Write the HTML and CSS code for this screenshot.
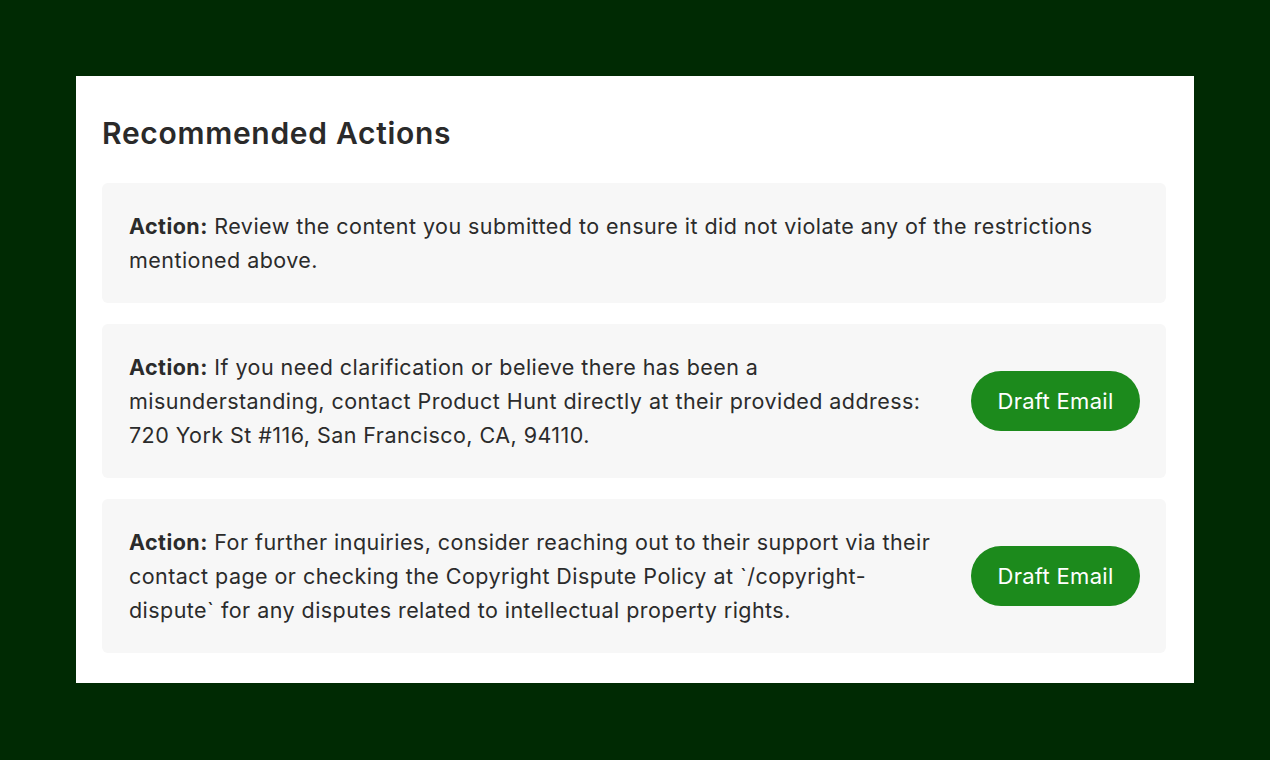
FILE: index.html
```html
<!DOCTYPE html>
<html>
<head>
  <meta charset="utf-8">
  <link rel="stylesheet" href="styles.css">
</head>
<body>
  <div class="panel">
    <h2 class="panel-title">Recommended Actions</h2>

    <div class="action-list">
      <div class="action">
        <p class="action-text"><strong>Action:</strong> Review the content you submitted to ensure it did not violate any of the restrictions mentioned above.</p>
      </div>

      <div class="action">
        <p class="action-text"><strong>Action:</strong> If you need clarification or believe there has been a misunderstanding, contact Product Hunt directly at their provided address: 720 York St #116, San Francisco, CA, 94110.</p>
        <button class="draft-btn" type="button">Draft Email</button>
      </div>

      <div class="action">
        <p class="action-text"><strong>Action:</strong> For further inquiries, consider reaching out to their support via their contact page or checking the Copyright Dispute Policy at `/copyright-dispute` for any disputes related to intellectual property rights.</p>
        <button class="draft-btn" type="button">Draft Email</button>
      </div>
    </div>
  </div>
</body>
</html>
```

FILE: styles.css
```css
:root {
  --page-bg: #002a03;
  --panel-bg: #ffffff;
  --card-bg: #f7f7f7;
  --text: #2b2b2b;
  --title: #2a2a2a;
  --primary: #1c8a1c;
  --primary-foreground: #ffffff;
  --radius: 6px;
  --font-sans: "Inter", "Noto Sans", "Liberation Sans", sans-serif;
}

html, body {
  margin: 0;
  padding: 0;
}

body {
  background: var(--page-bg);
  font-family: var(--font-sans);
  color: var(--text);
  padding: 76px;
  width: 1118px;
}

.panel {
  background: var(--panel-bg);
  padding: 40px 28px 30px 26px;
}

.panel-title {
  margin: 0 0 33px;
  font-size: 30px;
  line-height: 34px;
  font-weight: 600;
  letter-spacing: 0.7px;
  color: var(--title);
}

.action-list {
  display: flex;
  flex-direction: column;
  gap: 21px;
}

.action {
  display: flex;
  align-items: center;
  gap: 24px;
  padding: 26px 26px 26px 27px;
  background: var(--card-bg);
  border-radius: var(--radius);
}

.action-text {
  flex: 1;
  margin: 0;
  font-size: 21.5px;
  line-height: 34px;
  letter-spacing: 0.45px;
}

.action-text strong {
  font-weight: 700;
}

.draft-btn {
  flex: none;
  width: 169px;
  height: 60px;
  border: none;
  border-radius: 9999px;
  background: var(--primary);
  color: var(--primary-foreground);
  font-family: var(--font-sans);
  font-size: 22px;
  letter-spacing: 0.3px;
  cursor: pointer;
}
```
